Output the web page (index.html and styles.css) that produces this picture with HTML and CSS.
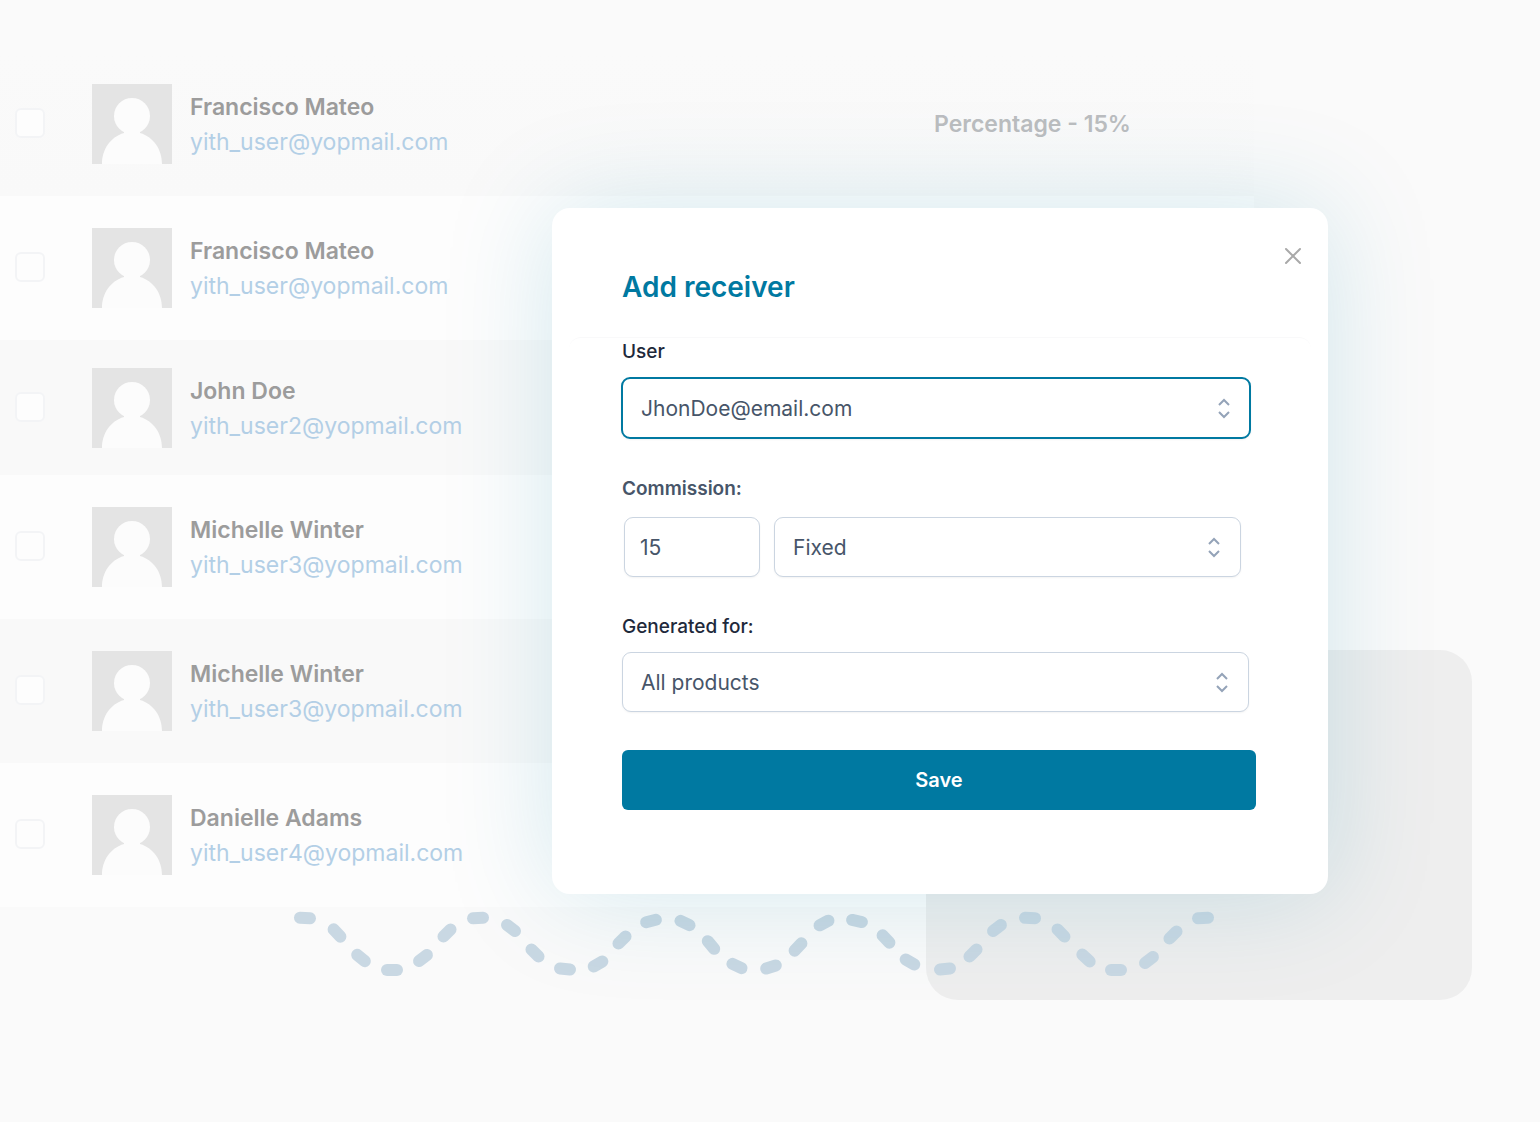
FILE: index.html
```
<!DOCTYPE html>
<html lang="en">
<head>
    <meta charset="UTF-8">
    <meta name="viewport" content="width=device-width, initial-scale=1.0">
    <title>Add receiver</title>
    <link rel="stylesheet" href="styles.css">
</head>
<body>

<!-- Shared shapes -->
<svg class="shapes" width="0" height="0" aria-hidden="true">
    <symbol id="avatar" viewBox="0 0 80 80">
        <rect width="80" height="80" fill="#e4e4e4"/>
        <circle cx="40" cy="32" r="18" fill="#fcfcfc"/>
        <path d="M32 46h16v3c14 4 22 17 22 31H10c0-14 8-27 22-31z" fill="#fcfcfc"/>
    </symbol>
    <symbol id="arrows" viewBox="0 0 14 22">
        <path d="M2 8l5-5 5 5M2 15l5 5 5-5" fill="none" stroke="#94a3b8" stroke-width="2"/>
    </symbol>
</svg>

<main class="page">
    <table class="receivers">
        <colgroup>
            <col class="col-check">
            <col class="col-user">
            <col>
        </colgroup>
        <tbody>
            <tr>
                <td><input type="checkbox" class="check" aria-label="Select Francisco Mateo"></td>
                <td><div class="user"><svg class="avatar"><use href="#avatar"/></svg><div class="user-text"><strong>Francisco Mateo</strong><a href="#">yith_user@yopmail.com</a></div></div></td>
                <td class="commission">Percentage - 15%</td>
            </tr>
            <tr>
                <td><input type="checkbox" class="check" aria-label="Select Francisco Mateo"></td>
                <td><div class="user"><svg class="avatar"><use href="#avatar"/></svg><div class="user-text"><strong>Francisco Mateo</strong><a href="#">yith_user@yopmail.com</a></div></div></td>
                <td></td>
            </tr>
            <tr class="short">
                <td><input type="checkbox" class="check" aria-label="Select John Doe"></td>
                <td><div class="user"><svg class="avatar"><use href="#avatar"/></svg><div class="user-text"><strong>John Doe</strong><a href="#">yith_user2@yopmail.com</a></div></div></td>
                <td></td>
            </tr>
            <tr>
                <td><input type="checkbox" class="check" aria-label="Select Michelle Winter"></td>
                <td><div class="user"><svg class="avatar"><use href="#avatar"/></svg><div class="user-text"><strong>Michelle Winter</strong><a href="#">yith_user3@yopmail.com</a></div></div></td>
                <td></td>
            </tr>
            <tr>
                <td><input type="checkbox" class="check" aria-label="Select Michelle Winter"></td>
                <td><div class="user"><svg class="avatar"><use href="#avatar"/></svg><div class="user-text"><strong>Michelle Winter</strong><a href="#">yith_user3@yopmail.com</a></div></div></td>
                <td></td>
            </tr>
            <tr>
                <td><input type="checkbox" class="check" aria-label="Select Danielle Adams"></td>
                <td><div class="user"><svg class="avatar"><use href="#avatar"/></svg><div class="user-text"><strong>Danielle Adams</strong><a href="#">yith_user4@yopmail.com</a></div></div></td>
                <td></td>
            </tr>
        </tbody>
    </table>

    <!-- Decoration behind the modal -->
    <div class="panel"></div>
    <svg class="wave" viewBox="290 908 930 72" aria-hidden="true">
        <defs><rect id="dot" x="-11" y="-6" width="22" height="12" rx="6"/></defs>
        <use href="#dot" transform="translate(305 918) rotate(3)"/>
        <use href="#dot" transform="translate(337 933) rotate(47)"/>
        <use href="#dot" transform="translate(361 958) rotate(40)"/>
        <use href="#dot" transform="translate(392 970)"/>
        <use href="#dot" transform="translate(423 958) rotate(-38)"/>
        <use href="#dot" transform="translate(447 933) rotate(-45)"/>
        <use href="#dot" transform="translate(478 918) rotate(-3)"/>
        <use href="#dot" transform="translate(511 928) rotate(38)"/>
        <use href="#dot" transform="translate(535 953) rotate(45)"/>
        <use href="#dot" transform="translate(565 969) rotate(6)"/>
        <use href="#dot" transform="translate(598 964) rotate(-30)"/>
        <use href="#dot" transform="translate(622 940) rotate(-45)"/>
        <use href="#dot" transform="translate(651 921) rotate(-14)"/>
        <use href="#dot" transform="translate(685 923) rotate(26)"/>
        <use href="#dot" transform="translate(711 945) rotate(50)"/>
        <use href="#dot" transform="translate(737 966) rotate(25)"/>
        <use href="#dot" transform="translate(771 967) rotate(-18)"/>
        <use href="#dot" transform="translate(798 947) rotate(-47)"/>
        <use href="#dot" transform="translate(824 923) rotate(-28)"/>
        <use href="#dot" transform="translate(857 921) rotate(12)"/>
        <use href="#dot" transform="translate(886 939) rotate(47)"/>
        <use href="#dot" transform="translate(910 962) rotate(30)"/>
        <use href="#dot" transform="translate(945 969) rotate(-6)"/>
        <use href="#dot" transform="translate(973 953) rotate(-45)"/>
        <use href="#dot" transform="translate(997 928) rotate(-38)"/>
        <use href="#dot" transform="translate(1030 918) rotate(2)"/>
        <use href="#dot" transform="translate(1061 933) rotate(46)"/>
        <use href="#dot" transform="translate(1086 958) rotate(43)"/>
        <use href="#dot" transform="translate(1116 970)"/>
        <use href="#dot" transform="translate(1149 960) rotate(-38)"/>
        <use href="#dot" transform="translate(1173 935) rotate(-45)"/>
        <use href="#dot" transform="translate(1203 918) rotate(-3)"/>
    </svg>

    <section class="modal" role="dialog" aria-labelledby="modalTitle">
        <button type="button" class="close-btn" aria-label="Close">
            <svg viewBox="0 0 18 18" width="18" height="18"><path d="M2 2l14 14M16 2L2 16" stroke="#a9a9a9" stroke-width="2" stroke-linecap="round"/></svg>
        </button>
        <header class="modal-header">
            <h1 id="modalTitle">Add receiver</h1>
        </header>
        <form class="modal-form">
            <div class="field">
                <label for="user">User</label>
                <div class="select active">
                    <select id="user"><option>JhonDoe@email.com</option></select>
                    <svg class="arrows"><use href="#arrows"/></svg>
                </div>
            </div>
            <div class="field">
                <label for="amount" class="strong">Commission:</label>
                <div class="commission-row">
                    <input type="text" id="amount" value="15">
                    <div class="select">
                        <select aria-label="Commission type"><option>Fixed</option></select>
                        <svg class="arrows"><use href="#arrows"/></svg>
                    </div>
                </div>
            </div>
            <div class="field">
                <label for="products">Generated for:</label>
                <div class="select">
                    <select id="products"><option>All products</option></select>
                    <svg class="arrows"><use href="#arrows"/></svg>
                </div>
            </div>
            <button type="button" class="save-btn">Save</button>
        </form>
    </section>
</main>

</body>
</html>
```
FILE: styles.css
```
* {
    box-sizing: border-box;
}

body {
    margin: 0;
    font-family: Inter, "Liberation Sans", sans-serif;
    background-color: #fafafa;
}

.shapes {
    position: absolute;
}

.page {
    position: relative;
    min-height: 100vh;
    padding-top: 52px;
    overflow: hidden;
}

/* Receivers table */
.receivers {
    width: calc(100% - 286px);
    table-layout: fixed;
    border-collapse: collapse;
}

.col-check {
    width: 92px;
}

.col-user {
    width: 842px;
}

.receivers tr {
    height: 144px;
    background-color: #fdfdfd;
}

.receivers tr.short {
    height: 135px;
}

.receivers tr:nth-child(odd) {
    background-color: #f9f9f9;
}

/* First row fades into the page */
.receivers tr:first-child {
    background: linear-gradient(#fafafa, #f9f9f9);
}

.receivers td {
    padding: 0;
    vertical-align: middle;
}

.check {
    appearance: none;
    display: block;
    width: 30px;
    height: 30px;
    margin: 0 0 2px 15px;
    border: 2px solid #f3f4f6;
    border-radius: 6px;
    background-color: #fdfdfd;
}

.user {
    display: flex;
    align-items: center;
    gap: 18px;
}

.avatar {
    width: 80px;
    height: 80px;
}

.user-text {
    padding-top: 2px;
}

.user-text strong,
.user-text a {
    display: block;
    font-size: 23px;
    line-height: 35px;
}

.user-text strong {
    font-weight: 600;
    color: #9c9c9c;
}

.user-text a {
    color: #b3cfe6;
    text-decoration: none;
}

.commission {
    font-size: 23px;
    font-weight: 600;
    color: #bbbdbf;
}

/* Decoration */
.panel {
    position: absolute;
    top: 650px;
    right: 68px;
    width: 546px;
    height: 350px;
    border-radius: 32px;
    background-color: #eeeeee;
}

.wave {
    position: absolute;
    top: 908px;
    left: 290px;
    width: 930px;
    height: 72px;
    fill: #c9d8e3;
}

/* Modal */
.modal {
    position: absolute;
    top: 208px;
    right: 212px;
    width: 776px;
    border-radius: 18px;
    background-color: #fff;
    box-shadow: 0 0 110px rgba(0, 130, 165, 0.17);
}

.close-btn {
    position: absolute;
    top: 36px;
    right: 23px;
    padding: 3px;
    border: none;
    background: none;
    cursor: pointer;
}

.close-btn svg {
    display: block;
}

.modal-header {
    padding: 61px 70px 32px;
}

.modal-header h1 {
    margin: 0;
    font-size: 28px;
    font-weight: 600;
    line-height: 36px;
    color: #0079a1;
}

.modal-form {
    margin: 0 17px;
    padding: 2px 55px 84px 53px;
    border-top: 1px solid #f9f9fa;
    border-radius: 12px;
}

.field {
    margin-bottom: 38px;
}

.field label {
    display: block;
    margin-bottom: 13px;
    font-size: 19px;
    font-weight: 500;
    line-height: 24px;
    color: #1e293b;
}

.field label.strong {
    margin-bottom: 16px;
    font-weight: 600;
    color: #475569;
}

.select {
    position: relative;
    margin-right: 7px;
}

.select select,
.commission-row input {
    display: block;
    width: 100%;
    height: 60px;
    padding: 0 18px;
    border: 1px solid #cbd5e1;
    border-radius: 9px;
    background-color: #fff;
    box-shadow: 0 1px 2px rgba(0, 0, 0, 0.05);
    font-family: inherit;
    font-size: 21px;
    color: #475569;
    appearance: none;
}

.select.active {
    margin: 0 5px 0 -1px;
}

.select.active select {
    height: 62px;
    border: 2px solid #0079a1;
}

.arrows {
    position: absolute;
    top: 50%;
    right: 20px;
    width: 14px;
    height: 22px;
    margin-top: -11px;
    pointer-events: none;
}

.commission-row {
    display: flex;
    gap: 14px;
    padding: 0 15px 0 2px;
}

.commission-row input {
    width: 136px;
    padding: 0 15px;
}

.commission-row .select {
    flex: 1;
    margin: 0;
}

.save-btn {
    display: block;
    width: 100%;
    height: 60px;
    border: none;
    border-radius: 6px;
    background-color: #0079a1;
    font-family: inherit;
    font-size: 20px;
    font-weight: 600;
    color: #fff;
    cursor: pointer;
}
```
